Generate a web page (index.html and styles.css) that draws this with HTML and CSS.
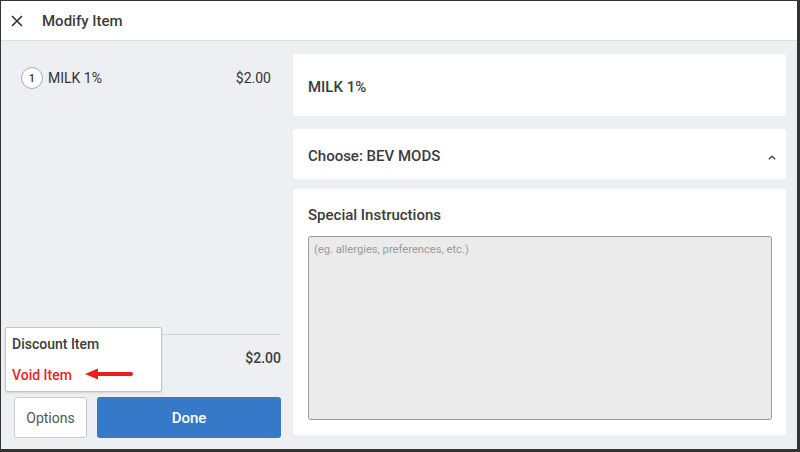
FILE: index.html
```html
<!DOCTYPE html>
<html>
<head>
<meta charset="utf-8">
<link rel="stylesheet" href="styles.css">
</head>
<body>
<div class="frame">
  <header class="header">
    <svg class="close" width="12" height="12" viewBox="0 0 12 12"><path d="M1 1L11 11M11 1L1 11" stroke="#333" stroke-width="1.6" fill="none"/></svg>
    <span class="title">Modify Item</span>
  </header>
  <main class="main">
    <section class="left">
      <div class="item-row">
        <span class="qty">1</span>
        <span class="item-name">MILK 1%</span>
        <span class="item-price">$2.00</span>
      </div>
      <div class="left-bottom">
        <div class="total-row">
          <span class="total-price">$2.00</span>
        </div>
        <div class="buttons">
          <button class="btn-options">Options</button>
          <button class="btn-done">Done</button>
        </div>
      </div>
      <div class="popup">
        <div class="popup-item">Discount Item</div>
        <div class="popup-item void">Void Item
          <svg class="arrow" width="48" height="12" viewBox="0 0 48 12"><path d="M12 6H46" stroke="#ee1c1c" stroke-width="4" stroke-linecap="round"/><path d="M0 6L13 0.5V11.5Z" fill="#ee1c1c"/></svg>
        </div>
      </div>
    </section>
    <section class="right">
      <div class="card card-name">MILK 1%</div>
      <div class="card card-choose">
        <span>Choose: BEV MODS</span>
        <svg class="caret" width="8" height="5" viewBox="0 0 8 5"><path d="M0.8 4.3L4 1.2L7.2 4.3" stroke="#444" stroke-width="1.3" fill="none"/></svg>
      </div>
      <div class="card card-special">
        <div class="special-title">Special Instructions</div>
        <div class="textarea">(eg. allergies, preferences, etc.)</div>
      </div>
    </section>
  </main>
</div>
</body>
</html>
```

FILE: styles.css
```css
* { box-sizing: border-box; }
html, body { margin: 0; padding: 0; }
body {
  font-family: Roboto, "Liberation Sans", sans-serif;
  color: #333;
  background: #fff;
}
.frame {
  width: 800px;
  height: 452px;
  border-left: 1px solid #333;
  border-top: 1px solid #333;
  border-right: 3px solid #333;
  border-bottom: 3px solid #333;
  display: flex;
  flex-direction: column;
  background: #eeeff2;
}
.header {
  height: 40px;
  flex: none;
  background: #fff;
  border-bottom: 1px solid #dcdde1;
  display: flex;
  align-items: center;
  padding-left: 10px;
}
.close { margin-top: 1px; }
.title {
  margin-left: 19px;
  font-size: 15px;
  font-weight: 500;
  color: #3c3c3c;
}
.main {
  flex: 1;
  display: flex;
  min-height: 0;
}
.left {
  width: 292px;
  flex: none;
  position: relative;
  display: flex;
  flex-direction: column;
  padding: 26px 12px 11px 20px;
}
.item-row {
  display: flex;
  align-items: center;
  font-size: 14px;
  height: 22px;
  margin-right: 10px;
}
.qty {
  width: 22px;
  height: 22px;
  border: 1px solid #a9a9a9;
  border-radius: 50%;
  background: #fff;
  display: flex;
  align-items: center;
  justify-content: center;
  font-size: 11px;
  font-weight: 500;
  color: #333;
}
.item-name { margin-left: 5px; flex: 1; color: #333; }
.item-price { color: #333; }
.left-bottom {
  margin-top: auto;
  margin-left: -7px;
}
.total-row {
  border-top: 1px solid #d4d5d8;
  height: 63px;
  display: flex;
  justify-content: flex-end;
  align-items: flex-start;
  padding-top: 15px;
}
.total-price { font-size: 14px; font-weight: 500; color: #3c3c3c; }
.buttons {
  display: flex;
  gap: 10px;
  height: 41px;
}
.btn-options {
  width: 73px;
  background: #fff;
  border: 1px solid #ccc;
  border-radius: 3px;
  font-family: Roboto, "Liberation Sans", sans-serif;
  font-size: 14px;
  color: #555;
  padding: 0;
}
.btn-done {
  flex: 1;
  background: #3579c8;
  border: none;
  border-radius: 3px;
  color: #fff;
  font-family: Roboto, "Liberation Sans", sans-serif;
  font-size: 15px;
  font-weight: 500;
  padding: 0;
}
.popup {
  position: absolute;
  left: 4px;
  top: 286px;
  width: 157px;
  height: 65px;
  background: #fff;
  border: 1px solid #c4c4c4;
  border-radius: 2px;
  box-shadow: 0 1px 2px rgba(0,0,0,0.12);
  padding: 8px 0 0 6px;
}
.popup-item {
  font-size: 14px;
  font-weight: 500;
  color: #3c3c3c;
  height: 16px;
  line-height: 16px;
}
.popup-item.void {
  margin-top: 15px;
  color: #ee2222;
  display: flex;
  align-items: center;
}
.arrow { margin-left: 13px; margin-top: -3px; }
.right {
  flex: 1;
  padding: 13px 11px 14px 0;
  display: flex;
  flex-direction: column;
}
.card {
  background: #fff;
  border-radius: 3px;
  font-size: 15px;
  font-weight: 500;
  color: #3c3c3c;
}
.card-name {
  height: 62px;
  display: flex;
  align-items: center;
  padding: 4px 0 0 15px;
}
.card-choose {
  margin-top: 13px;
  height: 50px;
  display: flex;
  align-items: center;
  justify-content: space-between;
  padding: 4px 10px 0 15px;
}
.caret { margin-top: 2px; }
.card-special {
  margin-top: 10px;
  flex: 1;
  display: flex;
  flex-direction: column;
  padding: 17px 14px 15px 15px;
}
.special-title { height: 19px; line-height: 19px; }
.textarea {
  margin-top: 11px;
  flex: 1;
  background: #ebebeb;
  border: 1px solid #9b9b9b;
  border-radius: 3px;
  font-size: 11.2px;
  font-weight: 400;
  color: #9a9a9a;
  padding: 6px 5px;
}
```
